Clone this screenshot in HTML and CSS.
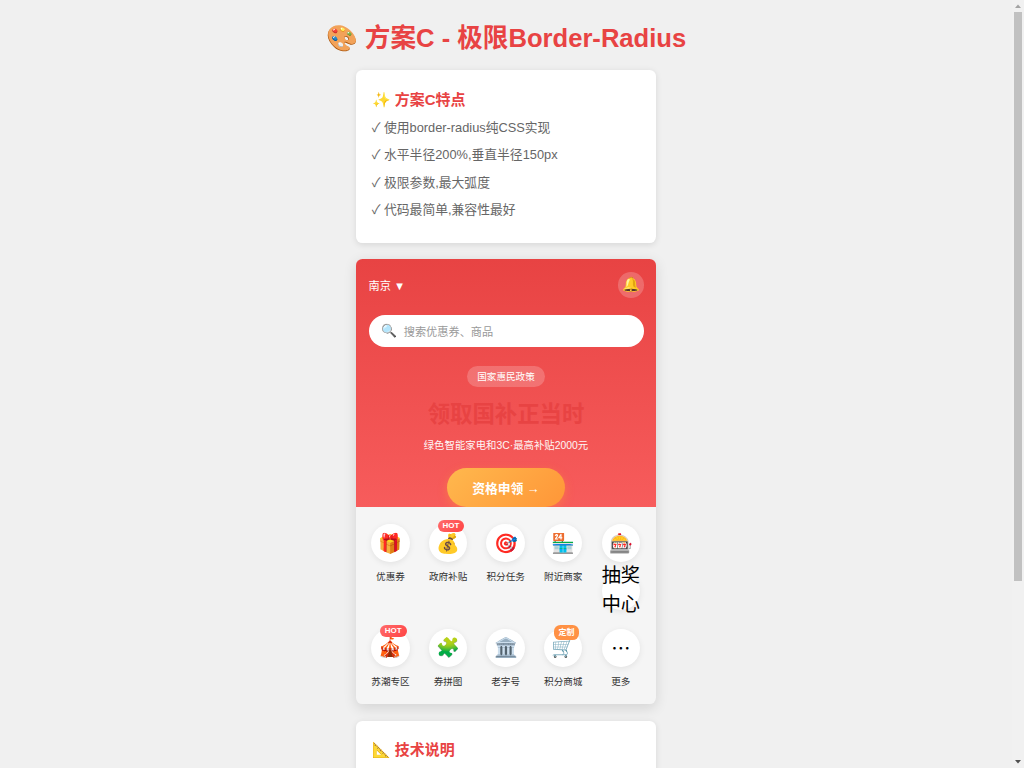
FILE: index.html
```html
<!DOCTYPE html>
<html lang="zh-CN">
<head>
<meta charset="UTF-8">
<title>方案C - 极限Border-Radius</title>
<link rel="stylesheet" href="styles.css">
</head>
<body>
<main class="page">
  <h1 class="title">🎨 方案C - 极限Border-Radius</h1>
  <section class="info">
    <h3 class="info-title">✨ 方案C特点</h3>
    <ul class="features">
      <li>✓ 使用border-radius纯CSS实现</li>
      <li>✓ 水平半径200%,垂直半径150px</li>
      <li>✓ 极限参数,最大弧度</li>
      <li>✓ 代码最简单,兼容性最好</li>
    </ul>
  </section>
  <section class="phone">
    <header class="hero">
      <div class="topbar">
        <span class="city">南京 ▼</span>
        <span class="bell">🔔</span>
      </div>
      <div class="search"><span class="search-icon">🔍</span><span>搜索优惠券、商品</span></div>
      <div class="banner">
        <span class="tag">国家惠民政策</span>
        <h2 class="headline">领取国补正当时</h2>
        <p class="sub">绿色智能家电和3C·最高补贴2000元</p>
        <a class="apply">资格申领 →</a>
      </div>
    </header>
    <nav class="grid">
      <div class="item"><div class="icon">🎁</div><div class="label">优惠券</div></div>
      <div class="item"><div class="icon">💰<span class="badge">HOT</span></div><div class="label">政府补贴</div></div>
      <div class="item"><div class="icon">🎯</div><div class="label">积分任务</div></div>
      <div class="item"><div class="icon">🏪</div><div class="label">附近商家</div></div>
      <div class="item"><div class="icon">🎰</div><div class="icon icon-text">抽奖中心</div></div>
      <div class="item"><div class="icon">🎪<span class="badge">HOT</span></div><div class="label">苏潮专区</div></div>
      <div class="item"><div class="icon">🧩</div><div class="label">券拼图</div></div>
      <div class="item"><div class="icon">🏛️</div><div class="label">老字号</div></div>
      <div class="item"><div class="icon">🛒<span class="badge badge-custom">定制</span></div><div class="label">积分商城</div></div>
      <div class="item"><div class="icon">⋯</div><div class="label">更多</div></div>
    </nav>
  </section>
  <section class="info">
    <h3 class="info-title">📐 技术说明</h3>
  </section>
</main>
<aside class="scrollbar">
  <svg class="arrow" viewBox="0 0 12 12"><path d="M3 8L6 4.5L9 8Z" fill="#a3a3a3"/></svg>
  <div class="thumb"></div>
  <svg class="arrow arrow-end" viewBox="0 0 12 12"><path d="M3 4L6 7.5L9 4Z" fill="#505050"/></svg>
</aside>
</body>
</html>
```

FILE: styles.css
```css
* { margin: 0; padding: 0; box-sizing: border-box; }

body {
  display: flex;
  height: 768px;
  overflow: hidden;
  background: #f0f0f0;
  font-family: "Liberation Sans", "Noto Sans CJK SC", sans-serif;
}

.page { flex: 1; height: 768px; overflow: hidden; display: flex; flex-direction: column; align-items: center; padding-top: 16px; }

.title { flex: none; height: 38.4px; line-height: 44px; margin-bottom: 16px; font-size: 25.6px; color: #e84343; white-space: nowrap; }

.info {
  flex: none;
  width: 300.6px;
  height: 172.8px;
  margin-bottom: 16.2px;
  padding: 15.6px 16px;
  border-radius: 6.4px;
  background: #fff;
  box-shadow: 0 1.6px 6.4px rgba(0, 0, 0, .1);
}
.info-title { height: 27.6px; line-height: 27px; font-size: 14.976px; color: #e84343; }
.features { list-style: none; font-size: 12.8px; line-height: 27.5px; color: #666; }

.phone {
  flex: none;
  width: 300.6px;
  height: 444.8px;
  margin-bottom: 16.4px;
  border-radius: 6.4px;
  overflow: hidden;
  background: #f5f5f5;
  box-shadow: 0 3.2px 12.8px rgba(0, 0, 0, .12);
}

.hero { height: 247.5px; padding: 12.8px; overflow: hidden; color: #fff; background: linear-gradient(180deg, #e84343, #f75c5c); }
.topbar { display: flex; justify-content: space-between; align-items: center; height: 25.6px; }
.city { font-size: 11.2px; }
.bell {
  display: flex; align-items: center; justify-content: center;
  width: 25.6px; height: 25.6px; border-radius: 50%;
  background: rgba(255, 255, 255, .2); font-size: 14.4px;
}
.search {
  display: flex; align-items: center; gap: 6.4px;
  height: 32px; margin-top: 17px; padding: 0 12.8px;
  border-radius: 20px; background: #fff; color: #999; font-size: 11.2px;
}
.search-icon { font-size: 12.8px; }

.banner { display: flex; flex-direction: column; align-items: center; padding-top: 19.4px; }
.tag { height: 20.8px; line-height: 22px; padding: 0 9.8px; border-radius: 12px; background: rgba(255, 255, 255, .2); font-size: 9.6px; }
.headline { height: 33px; line-height: 33px; margin-top: 10.8px; font-size: 22.4px; color: #e84343; }
.sub { height: 16px; line-height: 17px; margin-top: 6.5px; font-size: 10.4px; opacity: .95; }
.apply {
  height: 39px; line-height: 41px; margin-top: 15px; padding: 0 25.6px;
  border-radius: 20px; font-size: 12.8px; font-weight: bold; white-space: nowrap;
  background: linear-gradient(135deg, #ffb84d, #ff9638);
  box-shadow: 0 3.2px 9.6px rgba(255, 152, 56, .4);
}

.grid { display: grid; grid-template-columns: repeat(5, 44.8px); grid-auto-rows: 92px; gap: 12.8px; padding: 17px 12.4px 0; }
.item { display: flex; flex-direction: column; align-items: center; }
.icon {
  position: relative; flex: none;
  display: flex; align-items: center; justify-content: center;
  width: 38.4px; height: 38.4px; border-radius: 50%;
  background: #fff; color: #000; font-size: 19.2px;
  box-shadow: 0 1.6px 6.4px rgba(0, 0, 0, .08);
}
.icon-text { margin-top: 9.6px; line-height: 28.8px; text-align: center; }
.label { height: 14px; line-height: 14px; margin-top: 8px; font-size: 9.6px; color: #333; white-space: nowrap; }
.badge {
  position: absolute; top: -3.6px; right: 3.2px;
  height: 12px; line-height: 12.4px; padding: 0 4.8px; border-radius: 6.4px;
  background: linear-gradient(135deg, #ff6b6b, #ff4444); color: #fff;
  font-size: 8px; font-weight: bold; white-space: nowrap;
}
.badge-custom { height: 15px; line-height: 16px; border-radius: 6.4px; background: #ff9144; }

.scrollbar { display: flex; flex-direction: column; align-items: center; width: 12px; background: #f1f1f1; }
.arrow { width: 12px; height: 12px; }
.arrow-end { margin-top: auto; }
.thumb { width: 8px; height: 569px; background: #c1c1c1; }
```
